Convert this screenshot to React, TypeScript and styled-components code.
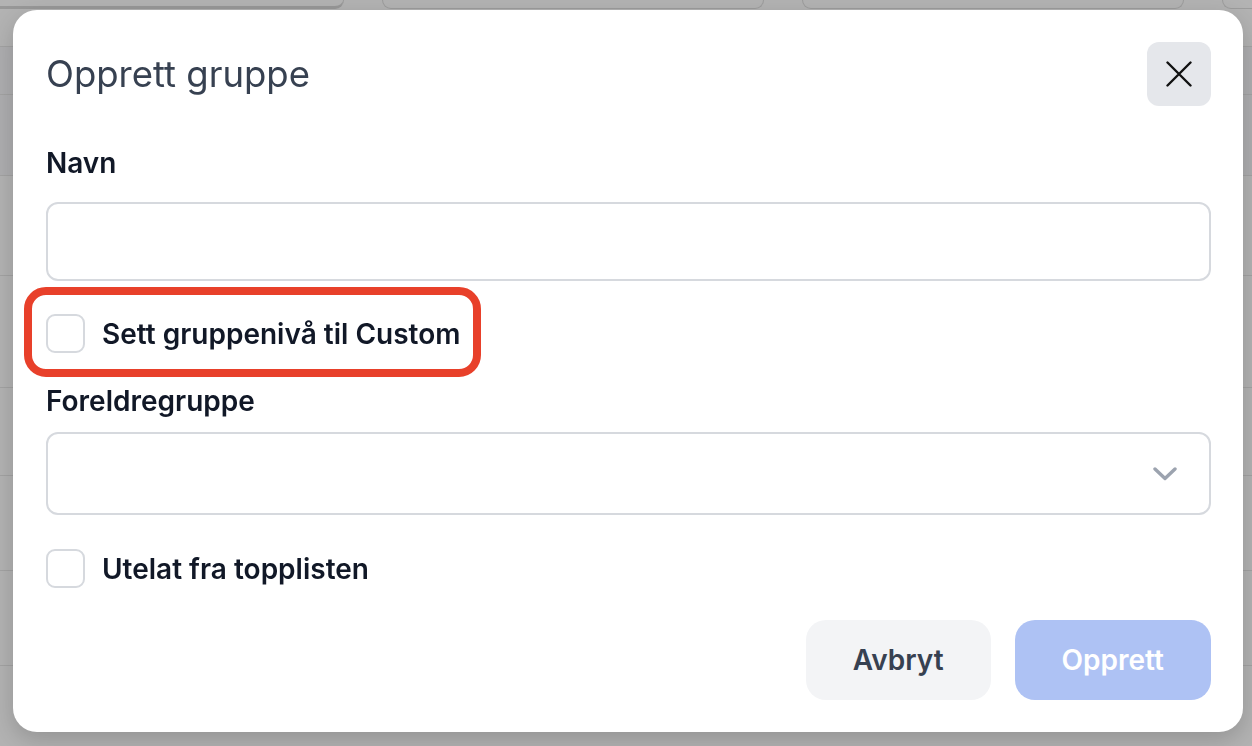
import React from "react";
import styled, { createGlobalStyle } from "styled-components";

const GlobalStyle = createGlobalStyle`
  * {
    box-sizing: border-box;
  }
  html, body {
    margin: 0;
    padding: 0;
    background-color: #b3b3b3;
    font-family: Inter, "Noto Sans", "Liberation Sans", sans-serif;
    overflow: hidden;
  }
`;

/* dimmed page behind the modal */
const Backdrop = styled.div`
  width: 1252px;
  height: 746px;
  display: flex;
  flex-direction: column;
  overflow: hidden;
`;

const CardRow = styled.div`
  display: flex;
  gap: 38px;
`;

const GhostCard = styled.div<{ $w?: number; $strong?: boolean; $edge?: "left" | "right" }>`
  flex: ${(p) => (p.$w ? `0 0 ${p.$w}px` : "1")};
  height: 9px;
  border: 1px solid #9c9c9c;
  border-top: 0;
  border-bottom: ${(p) => (p.$strong ? "3px solid #989898" : "1px solid #9c9c9c")};
  ${(p) => (p.$edge === "left" ? "border-left: 0;" : "")}
  ${(p) => (p.$edge === "right" ? "border-right: 0;" : "")}
  border-radius: ${(p) =>
    p.$edge === "left" ? "0 0 16px 0" : p.$edge === "right" ? "0 0 0 16px" : "0 0 16px 16px"};
`;

const GhostRow = styled.div<{ $h: number; $shade?: boolean }>`
  height: ${(p) => p.$h}px;
  border-bottom: 1px solid #a3a3a3;
  background-color: ${(p) => (p.$shade ? "#aeaeb0" : "transparent")};
`;

const Overlay = styled.div`
  position: fixed;
  inset: 0;
  display: flex;
  align-items: flex-start;
  padding: 10px 9px 0 13px;
`;

const Dialog = styled.div`
  width: 1230px;
  height: 722px;
  background-color: #ffffff;
  border-radius: 24px;
  padding: 32px 32px 32px 33px;
  display: flex;
  flex-direction: column;
  box-shadow: 0 8px 24px rgba(0, 0, 0, 0.18);
`;

const Header = styled.div`
  display: flex;
  align-items: center;
  justify-content: space-between;
  height: 64px;
`;

const Title = styled.h2`
  margin: 0;
  font-size: 36.5px;
  line-height: 44px;
  font-weight: 400;
  color: #374151;
`;

const CloseButton = styled.button`
  width: 64px;
  height: 64px;
  border: 0;
  border-radius: 12px;
  background-color: #e5e7eb;
  display: flex;
  align-items: center;
  justify-content: center;
  padding: 0;
  cursor: pointer;
`;

const Label = styled.label<{ $top: number; $gap: number }>`
  display: block;
  margin-top: ${(p) => p.$top}px;
  margin-bottom: ${(p) => p.$gap}px;
  font-size: 28px;
  line-height: 36px;
  font-weight: 600;
  color: #111827;
`;

const TextInput = styled.input`
  width: 100%;
  height: 79px;
  border: 2px solid #d6d9de;
  border-radius: 12px;
  outline: none;
  font-size: 28px;
  padding: 0 20px;
  font-family: inherit;
`;

const SelectBox = styled.div`
  width: 100%;
  height: 83px;
  border: 2px solid #d6d9de;
  border-radius: 12px;
  display: flex;
  align-items: center;
  justify-content: flex-end;
  padding-right: 32px;
`;

const CheckRow = styled.div<{ $top: number }>`
  position: relative;
  align-self: flex-start;
  display: flex;
  align-items: center;
  gap: 17px;
  height: 39px;
  margin-top: ${(p) => p.$top}px;
`;

/* red annotation drawn over the row */
const Highlight = styled.div`
  position: absolute;
  left: -22px;
  top: -27px;
  right: -21px;
  bottom: -24px;
  border: 8px solid #e8402a;
  border-radius: 22px;
  pointer-events: none;
`;

const CheckBox = styled.span`
  width: 39px;
  height: 39px;
  border: 2px solid #d6d9de;
  border-radius: 9px;
  background-color: #ffffff;
`;

const CheckText = styled.span`
  font-size: 28px;
  line-height: 36px;
  font-weight: 600;
  color: #111827;
`;

const Footer = styled.div`
  margin-top: auto;
  display: flex;
  justify-content: flex-end;
  gap: 24px;
`;

const ActionButton = styled.button<{ $primary?: boolean }>`
  height: 80px;
  padding: 0 47px;
  border: 0;
  border-radius: 20px;
  font-family: inherit;
  font-size: 28px;
  font-weight: 600;
  background-color: ${(p) => (p.$primary ? "#aec2f4" : "#f3f4f6")};
  color: ${(p) => (p.$primary ? "#ffffff" : "#374151")};
  cursor: pointer;
`;

const ghostRows = [
  { h: 38 },
  { h: 48, shade: true },
  { h: 81, shade: true },
  { h: 100 },
  { h: 112 },
  { h: 88 },
  { h: 95 },
  { h: 95 },
];

export default function App() {
  return (
    <>
      <GlobalStyle />
      <Backdrop>
        <CardRow>
          <GhostCard $w={344} $strong $edge="left" />
          <GhostCard $w={382} />
          <GhostCard $w={382} />
          <GhostCard $edge="right" />
        </CardRow>
        {ghostRows.map((r, i) => (
          <GhostRow key={i} $h={r.h} $shade={r.shade} />
        ))}
      </Backdrop>
      <Overlay>
        <Dialog>
          <Header>
            <Title>Opprett gruppe</Title>
            <CloseButton aria-label="Lukk">
              <svg width="26" height="26" viewBox="0 0 26 26" fill="none">
                <path
                  d="M1.5 1.5L24.5 24.5M24.5 1.5L1.5 24.5"
                  stroke="#111111"
                  strokeWidth="2.4"
                  strokeLinecap="round"
                />
              </svg>
            </CloseButton>
          </Header>

          <Label $top={39} $gap={21}>Navn</Label>
          <TextInput type="text" />

          <CheckRow $top={33}>
            <Highlight />
            <CheckBox />
            <CheckText>Sett gruppenivå til Custom</CheckText>
          </CheckRow>

          <Label $top={30} $gap={13}>Foreldregruppe</Label>
          <SelectBox>
            <svg width="24" height="14" viewBox="0 0 24 14" fill="none">
              <path
                d="M2 2L12 11.5L22 2"
                stroke="#9ca3af"
                strokeWidth="3.4"
                strokeLinecap="round"
                strokeLinejoin="round"
              />
            </svg>
          </SelectBox>

          <CheckRow $top={34}>
            <CheckBox />
            <CheckText>Utelat fra topplisten</CheckText>
          </CheckRow>

          <Footer>
            <ActionButton>Avbryt</ActionButton>
            <ActionButton $primary disabled>
              Opprett
            </ActionButton>
          </Footer>
        </Dialog>
      </Overlay>
    </>
  );
}
